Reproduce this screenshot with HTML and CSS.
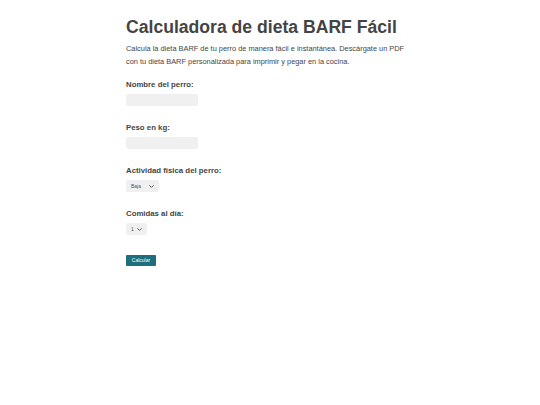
FILE: index.html
```html
<!DOCTYPE html>
<html lang="es">
<head>
<meta charset="utf-8">
<title>Calculadora de dieta BARF Fácil</title>
<link rel="stylesheet" href="styles.css">
</head>
<body>
<main class="container">
  <h1 class="title">Calculadora de dieta BARF Fácil</h1>
  <p class="intro">Calcula la dieta BARF de tu perro de manera fácil e instantánea. Descárgate un PDF con tu dieta BARF personalizada para imprimir y pegar en la cocina.</p>
  <form class="form">
    <div class="group">
      <label class="label" for="nombre">Nombre del perro:</label>
      <input class="input" id="nombre" type="text">
    </div>
    <div class="group">
      <label class="label" for="peso">Peso en kg:</label>
      <input class="input" id="peso" type="text">
    </div>
    <div class="group">
      <label class="label" for="actividad">Actividad física del perro:</label>
      <span class="select-wrap">
        <select class="select select-wide" id="actividad">
          <option>Baja</option>
          <option>Media</option>
          <option>Alta</option>
        </select>
        <svg class="chevron" viewBox="0 0 8 5" width="5" height="3" aria-hidden="true"><path d="M1 1 L4 4 L7 1" fill="none" stroke="#555" stroke-width="1.6" stroke-linecap="round" stroke-linejoin="round"/></svg>
      </span>
    </div>
    <div class="group">
      <label class="label" for="comidas">Comidas al día:</label>
      <span class="select-wrap">
        <select class="select select-narrow" id="comidas">
          <option>1</option>
          <option>2</option>
          <option>3</option>
        </select>
        <svg class="chevron" viewBox="0 0 8 5" width="5" height="3" aria-hidden="true"><path d="M1 1 L4 4 L7 1" fill="none" stroke="#555" stroke-width="1.6" stroke-linecap="round" stroke-linejoin="round"/></svg>
      </span>
    </div>
    <button class="button" type="button">Calcular</button>
  </form>
</main>
</body>
</html>
```
FILE: styles.css
```css
html, body {
  margin: 0;
  padding: 0;
  background: #ffffff;
}
body {
  font-family: "Liberation Sans", Arial, sans-serif;
  color: #444444;
}
.container {
  width: 288px;
  margin: 0 auto;
  padding-top: 17px;
}
.title {
  font-size: 17.6px;
  font-weight: bold;
  line-height: 21px;
  margin: 0 0 4px 0;
  color: #444444;
}
.intro {
  font-size: 7.4px;
  line-height: 13px;
  margin: 0 0 12px 0;
  color: #444444;
}
.form {
  display: flex;
  flex-direction: column;
  align-items: flex-start;
}
.group {
  display: flex;
  flex-direction: column;
  align-items: flex-start;
  margin-bottom: 17px;
}
.label {
  font-size: 7.8px;
  font-weight: bold;
  line-height: 10px;
  margin-bottom: 4px;
  color: #444444;
}
.input {
  display: block;
  width: 72px;
  height: 12px;
  box-sizing: border-box;
  border: none;
  border-radius: 2px;
  background: #f0f0f0;
  padding: 0 4px;
  font-size: 6px;
  margin: 0;
}
.select-wrap {
  position: relative;
  display: inline-block;
}
.select {
  display: block;
  -webkit-appearance: none;
  appearance: none;
  height: 12px;
  box-sizing: border-box;
  border: none;
  border-radius: 2px;
  background: #f0f0f0;
  font-size: 5px;
  line-height: 12px;
  padding: 0 0 0 5px;
  margin: 0;
  color: #555555;
  font-family: "Liberation Sans", Arial, sans-serif;
}
.select-wide {
  width: 33px;
}
.select-narrow {
  width: 21px;
}
.chevron {
  position: absolute;
  right: 5px;
  top: 5px;
  pointer-events: none;
}
.button {
  display: block;
  margin-top: 3px;
  width: 30px;
  height: 11px;
  padding: 0;
  border: none;
  border-radius: 1px;
  background: #1f6e7b;
  color: #ffffff;
  font-size: 5px;
  font-family: "Liberation Sans", Arial, sans-serif;
  line-height: 11px;
  text-align: center;
}
```
